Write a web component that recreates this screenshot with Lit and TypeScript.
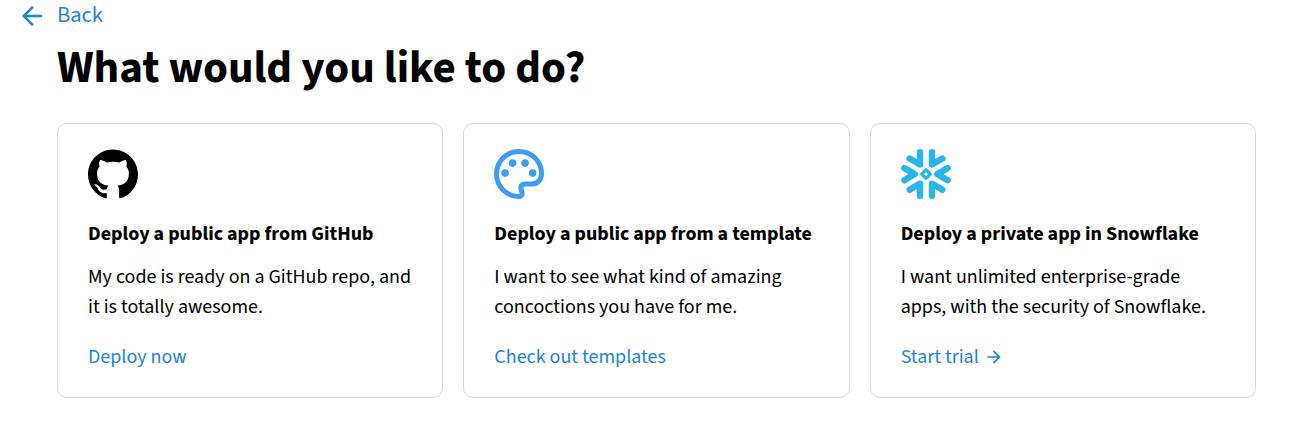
import { LitElement, html, css, svg, TemplateResult } from "lit";
import { customElement, property } from "lit/decorators.js";

const githubIcon = html`<svg width="50" height="50" viewBox="0 0 24 24" fill="#000">
  <path d="M12 .297c-6.63 0-12 5.373-12 12 0 5.303 3.438 9.8 8.205 11.385.6.113.82-.258.82-.577 0-.285-.01-1.04-.015-2.04-3.338.724-4.042-1.61-4.042-1.61C4.422 18.07 3.633 17.7 3.633 17.7c-1.087-.744.084-.729.084-.729 1.205.084 1.838 1.236 1.838 1.236 1.07 1.835 2.809 1.305 3.495.998.108-.776.417-1.305.76-1.605-2.665-.3-5.466-1.332-5.466-5.93 0-1.31.465-2.38 1.235-3.22-.135-.303-.54-1.523.105-3.176 0 0 1.005-.322 3.3 1.23.96-.267 1.98-.399 3-.405 1.02.006 2.04.138 3 .405 2.28-1.552 3.285-1.23 3.285-1.23.645 1.653.24 2.873.12 3.176.765.84 1.23 1.91 1.23 3.22 0 4.61-2.805 5.625-5.475 5.92.42.36.81 1.096.81 2.22 0 1.606-.015 2.896-.015 3.286 0 .315.21.69.825.57C20.565 22.092 24 17.592 24 12.297c0-6.627-5.373-12-12-12"/>
</svg>`;

const paletteIcon = html`<svg width="50" height="50" viewBox="0 0 50 50" fill="#3d9df3">
  <path fill="none" stroke="#3d9df3" stroke-width="5" stroke-linejoin="round"
    d="M25 2.5C12.3 2.5 2.5 12.6 2.5 25S12.6 47.5 25 47.5C27.3 47.5 28.5 46 28.1 43.8L27.1 40.2C26.2 37.1 28 35 31.2 35H38.2C43.7 35 47.5 30.5 47.5 24.6C47.5 11.8 37.2 2.5 25 2.5Z"/>
  <circle cx="11.1" cy="24.1" r="3.8"/>
  <circle cx="18.6" cy="14.1" r="3.8"/>
  <circle cx="31.1" cy="14.1" r="3.8"/>
  <circle cx="38.6" cy="24.1" r="3.8"/>
</svg>`;

const snowflakeIcon = html`<svg width="50" height="50" viewBox="0 0 50 50" fill="none"
  stroke="#29b5e8" stroke-width="6.4" stroke-linecap="round" stroke-linejoin="round">
  ${[
    "M19 3.3V15.6L8.6 9.5",
    "M31 3.3V15.6L41.4 9.5",
    "M19 46.8V34.6L8.6 40.7",
    "M31 46.8V34.6L41.4 40.7",
    "M3.3 19L13.7 25.1L3.3 31.2",
    "M46.7 19L36.3 25.1L46.7 31.2",
  ].map((d) => svg`<path d=${d}/>`)}
  <path stroke-width="3.4" d="M25 20.8L29.3 25.1L25 29.4L20.7 25.1Z"/>
</svg>`;

@customElement("option-card")
class OptionCard extends LitElement {
  @property({ attribute: false }) icon?: TemplateResult;
  @property() heading = "";
  @property() text = "";
  @property() action = "";
  @property({ type: Boolean }) arrow = false;

  static styles = css`
    :host {
      display: block;
      box-sizing: border-box;
      border: 1px solid #d5d8e4;
      border-radius: 10px;
      padding: 25px 30px;
      font-size: 20px;
      line-height: 30px;
    }
    .icon { height: 50px; }
    .icon svg { display: block; }
    h2 {
      margin: 20px 0 13px;
      font-size: inherit;
      font-weight: 700;
      white-space: nowrap;
    }
    p { margin: 0 0 20px; }
    a {
      display: flex;
      align-items: center;
      gap: 5px;
      color: #1c83e1;
      text-decoration: none;
    }
  `;

  render() {
    return html`
      <div class="icon">${this.icon}</div>
      <h2>${this.heading}</h2>
      <p>${this.text}</p>
      <a href="#">${this.action}${this.arrow
        ? html`<svg width="20" height="20" viewBox="0 0 24 24" fill="#1c83e1">
            <path d="M12 4l-1.41 1.41L16.17 11H4v2h12.17l-5.58 5.59L12 20l8-8z"/>
          </svg>`
        : null}</a>
    `;
  }
}

@customElement("app-root")
class AppRoot extends LitElement {
  static styles = css`
    :host {
      display: block;
      min-height: 100vh;
      background: #fff;
      color: #000;
      font-family: "Source Sans Pro", "Source Sans 3", "Noto Sans CJK SC", sans-serif;
    }
    .back {
      display: flex;
      align-items: flex-start;
      gap: 10px;
      height: 26px;
      padding-left: 17px;
      color: #1c83e1;
      font-size: 22.5px;
      line-height: 30px;
      text-decoration: none;
    }
    .back svg { margin-top: 1px; }
    h1 {
      margin: 16px 0 28px 57px;
      font-size: 45px;
      font-weight: 700;
      line-height: 53px;
    }
    .cards {
      display: grid;
      grid-template-columns: repeat(3, 1fr);
      gap: 20px;
      height: 275px;
      padding: 0 36px 0 57px;
    }
  `;

  render() {
    return html`
      <a class="back" href="#">
        <svg width="30" height="30" viewBox="0 0 24 24" fill="#1c83e1">
          <path d="M20 11H7.83l5.59-5.59L12 4l-8 8 8 8 1.41-1.41L7.83 13H20v-2z"/>
        </svg>
        <span>Back</span>
      </a>
      <h1>What would you like to do?</h1>
      <div class="cards">
        <option-card .icon=${githubIcon}
          heading="Deploy a public app from GitHub"
          text="My code is ready on a GitHub repo, and it is totally awesome."
          action="Deploy now"></option-card>
        <option-card .icon=${paletteIcon}
          heading="Deploy a public app from a template"
          text="I want to see what kind of amazing concoctions you have for me."
          action="Check out templates"></option-card>
        <option-card .icon=${snowflakeIcon}
          heading="Deploy a private app in Snowflake"
          text="I want unlimited enterprise-grade apps, with the security of Snowflake."
          action="Start trial" arrow></option-card>
      </div>
    `;
  }
}
